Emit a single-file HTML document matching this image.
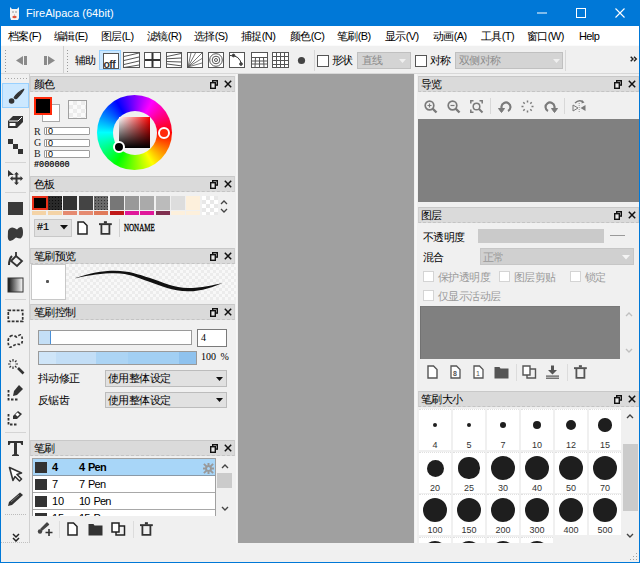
<!DOCTYPE html>
<html><head><meta charset="utf-8">
<style>
*{box-sizing:border-box;margin:0;padding:0}
html,body{width:640px;height:563px;overflow:hidden;background:#f0f0f0;font-family:"Liberation Sans",sans-serif;font-size:11px;color:#000}
.a{position:absolute}
svg{position:absolute;display:block}
#title{left:0;top:0;width:640px;height:26px;background:#0078d7}
#frameL{left:0;top:26px;width:1px;height:537px;background:#0078d7}
#frameR{left:639px;top:26px;width:1px;height:537px;background:#0078d7}
#frameB{left:0;top:562px;width:640px;height:1px;background:#0078d7}
#menu{left:1px;top:26px;width:638px;height:19px;background:#fff}
.mi{position:absolute;top:28px;font-size:11px;line-height:16px;white-space:nowrap;letter-spacing:-0.6px}
#tb{left:1px;top:45px;width:638px;height:29px;background:#f0f0f0;border-top:1px solid #fbfbfb;border-bottom:1px solid #dcdcdc}
.hdr{position:absolute;height:16px;background:#dadada;border:1px solid #cfcfcf;border-top:1px solid #c8c8c8;border-bottom:1px dashed #c4c4c4}
.hdr span{position:absolute;left:3px;top:0px;font-size:11px;line-height:14px;letter-spacing:-0.6px}
.canvas{background:#a0a0a0}
.sep{position:absolute;background:#c8c8c8}
</style></head><body>
<div id="title" class="a"></div>
<div class="a" style="left:26px;top:4px;color:#fff;font-size:11px;line-height:18px;letter-spacing:0.05px">FireAlpaca (64bit)</div>

<svg style="left:9px;top:6px" width="11" height="15"><path d="M1 1 L3 3 L8 3 L10 1 L10 12 L9 14 L2 14 L1 11 Z" fill="#f4f4f4"/><path d="M3 6 H5 M6 6 H8" stroke="#999" stroke-width="1"/><path d="M5 9 H6" stroke="#aaa"/><ellipse cx="5.5" cy="11" rx="2.2" ry="1.2" fill="#e2533a"/></svg>
<svg style="left:537px;top:12px" width="10" height="2"><rect x="0" y="0.5" width="10" height="1" fill="#fff"/></svg>
<svg style="left:576px;top:8px" width="10" height="10"><rect x="0.5" y="0.5" width="9" height="9" fill="none" stroke="#fff"/></svg>
<svg style="left:615px;top:8px" width="10" height="10"><path d="M0.5 0.5 L9.5 9.5 M9.5 0.5 L0.5 9.5" stroke="#fff" stroke-width="1.1"/></svg>
<div id="frameL" class="a"></div><div id="frameR" class="a"></div><div id="frameB" class="a"></div>
<div id="menu" class="a"></div>
<div class="mi" style="left:8px">档案(F)</div>
<div class="mi" style="left:54px">编辑(E)</div>
<div class="mi" style="left:101px">图层(L)</div>
<div class="mi" style="left:147px">滤镜(R)</div>
<div class="mi" style="left:194px">选择(S)</div>
<div class="mi" style="left:241px">捕捉(N)</div>
<div class="mi" style="left:290px">颜色(C)</div>
<div class="mi" style="left:337px">笔刷(B)</div>
<div class="mi" style="left:385px">显示(V)</div>
<div class="mi" style="left:433px">动画(A)</div>
<div class="mi" style="left:481px">工具(T)</div>
<div class="mi" style="left:527px">窗口(W)</div>
<div class="mi" style="left:579px">Help</div>
<div id="tb" class="a"></div>
<!-- toolbar -->
<div class="a" style="left:1px;top:73px;width:638px;height:1px;background:#d8d8d8"></div>
<svg style="left:4px;top:49px" width="4" height="23"><g fill="#9a9a9a"><rect x="1" y="1" width="1" height="1"/><rect x="1" y="4" width="1" height="1"/><rect x="1" y="7" width="1" height="1"/><rect x="1" y="10" width="1" height="1"/><rect x="1" y="13" width="1" height="1"/><rect x="1" y="16" width="1" height="1"/><rect x="1" y="19" width="1" height="1"/><rect x="1" y="22" width="1" height="1"/></g></svg>
<svg style="left:16px;top:56px" width="40" height="10"><g fill="#8a8a8a"><path d="M0 4.5 L7 0 L7 9 Z"/><rect x="8" y="0" width="3" height="9"/><rect x="28" y="0" width="3" height="9"/><path d="M32 0 L39 4.5 L32 9 Z"/></g></svg>
<div class="a" style="left:63px;top:46px;width:1px;height:27px;background:#d0d0d0"></div>
<svg style="left:66px;top:49px" width="4" height="23"><g fill="#9a9a9a"><rect x="1" y="1" width="1" height="1"/><rect x="1" y="4" width="1" height="1"/><rect x="1" y="7" width="1" height="1"/><rect x="1" y="10" width="1" height="1"/><rect x="1" y="13" width="1" height="1"/><rect x="1" y="16" width="1" height="1"/><rect x="1" y="19" width="1" height="1"/><rect x="1" y="22" width="1" height="1"/></g></svg>
<div class="a" style="left:75px;top:53px;font-size:11px;line-height:14px;letter-spacing:-0.6px">辅助</div>
<div class="a" style="left:99px;top:50px;width:22px;height:20px;background:#cce8ff;border:1px solid #99d1ff"></div>
<svg style="left:103px;top:53px" width="16" height="16"><rect x="0.5" y="0.5" width="15" height="15" fill="#fff" stroke="#555"/><text x="0.5" y="15" font-family="Liberation Sans" font-weight="bold" font-size="10.5" fill="#333" letter-spacing="-0.6">off</text></svg>
<svg style="left:123px;top:52px" width="17" height="16" stroke="#555" fill="none"><rect x="0.5" y="0.5" width="16" height="15" fill="#fff"/><path d="M1 4.5 L16 1 M1 8.5 L16 5 M1 12.5 L16 9 M1 15.5 L16 13"/></svg>
<svg style="left:144px;top:52px" width="17" height="16" stroke="#555" fill="none"><rect x="0.5" y="0.5" width="16" height="15" fill="#fff"/><path d="M8.5 1 V15 M1 8 H16" stroke-width="2" stroke="#333"/></svg>
<svg style="left:166px;top:52px" width="16" height="16" stroke="#555" fill="none" stroke-width="0.8"><rect x="0.5" y="0.5" width="15" height="15" fill="#fff" stroke-width="1"/><path d="M1 4.5 L15 1.5 M1 6.8 L15 6 M1 9.5 L15 10 M1 12 L15 13.8" stroke-width="1"/></svg>
<svg style="left:187px;top:52px" width="16" height="16" stroke="#555" fill="none" stroke-width="0.8"><rect x="0.5" y="0.5" width="15" height="15" fill="#fff" stroke-width="1"/><path d="M1 15 L4 1 M1 15 L8.5 1 M1 15 L15 1 M1 15 L15 6.5 M1 15 L15 11"/></svg>
<svg style="left:208px;top:52px" width="16" height="16" stroke="#555" fill="none"><rect x="0.5" y="0.5" width="15" height="15" fill="#fff"/><circle cx="8" cy="8" r="6.3"/><circle cx="8" cy="8" r="3.8"/><circle cx="8" cy="8" r="1.5"/></svg>
<svg style="left:229px;top:52px" width="16" height="16" stroke="#555" fill="none"><rect x="0.5" y="0.5" width="15" height="15" fill="#fff"/><path d="M1 3.5 Q11 3 12.5 13" stroke="#333"/><circle cx="4.5" cy="3.5" r="1.4" fill="#333"/><circle cx="12" cy="12" r="1.4" fill="#333"/></svg>
<svg style="left:251px;top:52px" width="17" height="16" stroke="#555" fill="none"><rect x="0.5" y="0.5" width="16" height="15" fill="#fff"/><path d="M1 5.5 H16 M1 9 H16 M1 12 H16 M4.5 5.5 L4 15 M8.5 5.5 V15 M12.5 5.5 L13 15"/></svg>
<svg style="left:272px;top:52px" width="17" height="16" stroke="#555" fill="none"><rect x="0.5" y="0.5" width="16" height="15" fill="#fff"/><path d="M1 4.5 H16 M1 8.5 H16 M1 12.5 H16 M4.5 1 V15 M8.5 1 V15 M12.5 1 V15"/></svg>
<svg style="left:297px;top:56px" width="9" height="9"><circle cx="4.5" cy="4.5" r="3.6" fill="#444"/></svg>
<div class="a" style="left:314px;top:50px;width:1px;height:21px;background:#d8d8d8"></div>
<div class="a" style="left:317px;top:55px;width:12px;height:12px;background:#fff;border:1px solid #555"></div>
<div class="a" style="left:332px;top:53px;font-size:11px;line-height:14px;letter-spacing:-0.6px">形状</div>
<div class="a" style="left:357px;top:52px;width:54px;height:17px;background:#d4d4d4;border:1px solid #c0c0c0"></div>
<div class="a" style="left:362px;top:53px;font-size:11px;line-height:14px;color:#8c8c8c;letter-spacing:-0.6px">直线</div>
<svg style="left:399px;top:59px" width="7" height="4"><path d="M0 0 H7 L3.5 4 Z" fill="#f0f0f0"/></svg>
<div class="a" style="left:415px;top:55px;width:12px;height:12px;background:#fff;border:1px solid #555"></div>
<div class="a" style="left:430px;top:53px;font-size:11px;line-height:14px;letter-spacing:-0.6px">对称</div>
<div class="a" style="left:455px;top:52px;width:108px;height:17px;background:#d4d4d4;border:1px solid #c0c0c0"></div>
<div class="a" style="left:459px;top:53px;font-size:11px;line-height:14px;color:#8c8c8c;letter-spacing:-0.6px">双侧对称</div>
<svg style="left:553px;top:59px" width="7" height="4"><path d="M0 0 H7 L3.5 4 Z" fill="#f0f0f0"/></svg>
<div class="a" style="left:565px;top:50px;width:1px;height:21px;background:#d8d8d8"></div>
<svg style="left:630px;top:56px" width="8" height="6" fill="none" stroke="#222" stroke-width="1.4"><path d="M0.7 0.7 L3 3 L0.7 5.3 M4 0.7 L6.3 3 L4 5.3"/></svg>


<!-- canvas -->
<div class="a canvas" style="left:238px;top:74px;width:176px;height:469px"></div>

<div class="a" style="left:415px;top:74px;width:2px;height:469px;background:#f7f7f7"></div>
<div class="a" style="left:236px;top:74px;width:1px;height:469px;background:#f7f7f7"></div>
<!-- tool column -->
<div class="a" style="left:1px;top:74px;width:29px;height:469px;border-right:1px solid #d0d0d0;border-bottom:1px dotted #c0c0c0"></div>


<!-- tools -->
<svg style="left:4px;top:77px" width="24" height="3"><g fill="#a8a8a8"><rect x="1" y="1" width="1" height="1"/><rect x="4" y="1" width="1" height="1"/><rect x="7" y="1" width="1" height="1"/><rect x="10" y="1" width="1" height="1"/><rect x="13" y="1" width="1" height="1"/><rect x="16" y="1" width="1" height="1"/><rect x="19" y="1" width="1" height="1"/><rect x="22" y="1" width="1" height="1"/></g></svg>
<div class="a" style="left:2px;top:83px;width:27px;height:25px;background:#cce8ff;border:1px solid #99d1ff"></div>
<svg style="left:7px;top:88px" width="18" height="18"><path d="M16.8 1.2 C16 3 13 7 9.5 10.5 C8.5 11 7.5 10.5 7.2 9.5 C9 6.5 13 3 16.8 1.2 Z" fill="#333" stroke="#333" stroke-width="1.2" stroke-linejoin="round"/><circle cx="4.6" cy="13" r="2.8" fill="#333"/></svg>
<svg style="left:7px;top:115px" width="17" height="14"><path d="M1 6 L6 1 L16 1 L16 7 L10 13 L1 13 Z" fill="#333"/><rect x="2.5" y="8" width="6" height="3" fill="#fff"/><path d="M2 6 L11 6 L15 2" stroke="#fff" stroke-width="1" fill="none"/></svg>
<svg style="left:7px;top:138px" width="17" height="17" fill="#333"><rect x="1" y="1" width="5" height="5"/><rect x="6" y="6" width="5" height="5"/><rect x="11" y="11" width="5" height="5"/></svg>
<div class="a" style="left:5px;top:162px;width:21px;height:1px;background:#d4d4d4"></div>
<svg style="left:7px;top:169px" width="17" height="17" fill="#333"><path d="M1 1 L1 8 L3 6 L7 6 Z"/><path d="M9.5 3 L12 5.5 H10.5 V8.5 H13.5 V7 L16 9.5 L13.5 12 V10.5 H10.5 V13.5 H12 L9.5 16 L7 13.5 H8.5 V10.5 H5.5 V12 L3 9.5 L5.5 7 V8.5 H8.5 V5.5 H7 Z"/></svg>
<div class="a" style="left:5px;top:192px;width:21px;height:1px;background:#d4d4d4"></div>
<svg style="left:7px;top:201px" width="17" height="15"><rect x="1" y="1" width="15" height="13" fill="#3a3a3a"/></svg>
<svg style="left:6px;top:226px" width="18" height="16"><path d="M2 5 Q3 1.5 6.5 1.5 Q9 2 11 3.5 Q13 0.5 15.5 1 Q17 2 17 6.5 Q17 11 14.5 12.5 Q12.5 12.5 10 11.5 Q7 14.5 4 15 Q2 14.5 1.8 11 Z" fill="#3a3a3a"/></svg>
<svg style="left:7px;top:250px" width="17" height="18" fill="none" stroke="#333" stroke-width="1.8"><path d="M9 6 L15 11 L10 16 L4 11 Z"/><path d="M9 2 V6"/><path d="M5 6 Q2 9 2 15" stroke-width="2"/></svg>
<svg style="left:7px;top:277px" width="17" height="16"><defs><linearGradient id="gr" x1="0" x2="1"><stop offset="0" stop-color="#111"/><stop offset="1" stop-color="#fff"/></linearGradient></defs><rect x="1" y="1" width="15" height="14" fill="url(#gr)" stroke="#333"/></svg>
<div class="a" style="left:5px;top:299px;width:21px;height:1px;background:#d4d4d4"></div>
<svg style="left:7px;top:309px" width="17" height="14" fill="none" stroke="#333" stroke-width="1.7" stroke-dasharray="2.8 1.4"><rect x="1.3" y="1.3" width="14.4" height="11"/></svg>
<svg style="left:6px;top:333px" width="18" height="17" fill="none" stroke="#333" stroke-width="1.7" stroke-dasharray="2.6 1.8"><path d="M6 2.5 Q2.5 3.5 2.2 7.5 Q2 12 3.5 14 Q5.5 14.5 8 12.3 Q11 10.5 13.5 11.5 Q16 11.5 16.3 8 Q16.5 3 14.5 1.8 Q12 2.5 10.5 4 Q8 2.3 6 2.5 Z"/></svg>
<svg style="left:7px;top:358px" width="18" height="18" stroke="#333" fill="none"><path d="M11 10 L16.5 15.5" stroke-width="2.6"/><path d="M6 1 V3.5 M6 8.5 V11 M1 6 H3.5 M8.5 6 H11 M2.5 2.5 L4 4 M8 8 L9.5 9.5 M9.5 2.5 L8 4 M2.5 9.5 L4 8" stroke-width="1.2"/></svg>
<svg style="left:7px;top:384px" width="17" height="17"><path d="M1.5 6 V15.5 H11" fill="none" stroke="#333" stroke-width="1.8" stroke-dasharray="2.5 1.5"/><path d="M12 1 L16 5 L10 11 L6 12 L7 7 Z" fill="#333"/></svg>
<svg style="left:7px;top:410px" width="17" height="16"><path d="M1.5 4 V14.5 H11" fill="none" stroke="#333" stroke-width="1.8" stroke-dasharray="2.5 1.5"/><path d="M11 1 L15 4 L10 9 L6 9 L6 6 Z" fill="#333"/><rect x="9" y="3" width="3" height="3" fill="#fff" transform="rotate(40 10.5 4.5)"/></svg>
<div class="a" style="left:5px;top:432px;width:21px;height:1px;background:#d4d4d4"></div>
<svg style="left:7px;top:440px" width="17" height="17"><path d="M1 1 H16 V5 H14.5 L13.5 3 H10 V14 L12 15 V16 H5 V15 L7 14 V3 H3.5 L2.5 5 H1 Z" fill="#333"/></svg>
<svg style="left:8px;top:466px" width="16" height="16"><path d="M1.5 1.5 L13.5 7 L9 8.5 L13.5 13 L11.5 15 L7 10.5 L5 14.5 Z" fill="#fff" stroke="#333" stroke-width="1.6" stroke-linejoin="round"/></svg>
<svg style="left:7px;top:492px" width="17" height="15"><path d="M16 3 L13 0.5 L2 10 L1 14 L5 13 Z" fill="#333"/><path d="M4 10 L12 3" stroke="#888" stroke-width="0.8"/></svg>
<div class="a" style="left:5px;top:514px;width:21px;height:1px;border-top:1px dotted #bbb"></div>
<svg style="left:12px;top:533px" width="8" height="9" fill="none" stroke="#222" stroke-width="1.5"><path d="M1 1 L4 4 L7 1 M1 5 L4 8 L7 5"/></svg>
<!-- color panel -->
<div class="a" style="left:42px;top:104px;width:18px;height:18px;background:#fff;border:1px solid #aaa"></div>
<div class="a" style="left:34px;top:97px;width:18px;height:18px;background:#000;border:2px solid #ff2a0a"></div>
<div class="a" style="left:68px;top:100px;width:19px;height:19px;border:1px solid #a0a0a0;background-color:#fafafa;background-image:linear-gradient(45deg,#ececec 25%,transparent 25%,transparent 75%,#ececec 75%),linear-gradient(45deg,#ececec 25%,transparent 25%,transparent 75%,#ececec 75%);background-size:8px 8px;background-position:0 0,4px 4px"></div>
<div class="a" style="left:34px;top:127px;font-family:'Liberation Serif',serif;font-size:10px;line-height:10px;color:#222">R</div>
<div class="a" style="left:34px;top:138px;font-family:'Liberation Serif',serif;font-size:10px;line-height:10px;color:#222">G</div>
<div class="a" style="left:34px;top:149px;font-family:'Liberation Serif',serif;font-size:10px;line-height:10px;color:#222">B</div>
<div class="a" style="left:44px;top:127px;width:46px;height:8px;background:#fff;border:1px solid #9c9c9c;border-radius:1px"></div>
<div class="a" style="left:44px;top:139px;width:46px;height:8px;background:#fff;border:1px solid #9c9c9c;border-radius:1px"></div>
<div class="a" style="left:44px;top:150px;width:46px;height:8px;background:#fff;border:1px solid #9c9c9c;border-radius:1px"></div>
<div class="a" style="left:46px;top:128px;width:1px;height:6px;background:#888"></div>
<div class="a" style="left:46px;top:140px;width:1px;height:6px;background:#888"></div>
<div class="a" style="left:46px;top:151px;width:1px;height:6px;background:#888"></div>
<div class="a" style="left:48px;top:126px;font-family:'Liberation Sans',sans-serif;font-size:9px;line-height:10px">0</div>
<div class="a" style="left:48px;top:138px;font-family:'Liberation Sans',sans-serif;font-size:9px;line-height:10px">0</div>
<div class="a" style="left:48px;top:149px;font-family:'Liberation Sans',sans-serif;font-size:9px;line-height:10px">0</div>
<div class="a" style="left:34px;top:160px;font-family:'Liberation Mono',monospace;font-size:8.5px;line-height:10px;color:#000;-webkit-text-stroke:0.2px #000">#000000</div>
<div class="a" style="left:97px;top:95px;width:75px;height:75px;border-radius:50%;background:conic-gradient(from 90deg,#f00,#ff0,#0f0,#0ff,#00f,#f0f,#f00)"></div>
<div class="a" style="left:112.5px;top:110.5px;width:44px;height:44px;border-radius:50%;background:#f0f0f0"></div>
<div class="a" style="left:119px;top:117px;width:31px;height:31px;background:linear-gradient(to bottom,rgba(0,0,0,0),#000),linear-gradient(to right,#fff,#f00)"></div>
<div class="a" style="left:158px;top:127px;width:12px;height:12px;border-radius:50%;background:#ff2a0a;border:2px solid #fff"></div>
<div class="a" style="left:113px;top:141px;width:12px;height:12px;border-radius:50%;background:#000;border:2px solid #fff"></div>
<!-- palette -->
<div class="a" style="left:32px;top:196px;width:14px;height:14px;background:#000000"></div>
<div class="a" style="left:32px;top:211px;width:14px;height:4px;background:#f4d3a6"></div>
<div class="a" style="left:48px;top:196px;width:14px;height:14px;background:#2a2a2a;background-image:radial-gradient(circle,#0c0c0c 40%,transparent 45%);background-size:3px 3px"></div>
<div class="a" style="left:48px;top:211px;width:14px;height:4px;background:#f4d3a6"></div>
<div class="a" style="left:63px;top:196px;width:14px;height:14px;background:#333333"></div>
<div class="a" style="left:63px;top:211px;width:14px;height:4px;background:#e58a70"></div>
<div class="a" style="left:79px;top:196px;width:14px;height:14px;background:#444444"></div>
<div class="a" style="left:79px;top:211px;width:14px;height:4px;background:#e58a70"></div>
<div class="a" style="left:94px;top:196px;width:14px;height:14px;background:#6a6a6a;background-image:radial-gradient(circle,#333 40%,transparent 45%);background-size:3px 3px"></div>
<div class="a" style="left:94px;top:211px;width:14px;height:4px;background:#e07a5a"></div>
<div class="a" style="left:110px;top:196px;width:14px;height:14px;background:#777777"></div>
<div class="a" style="left:110px;top:211px;width:14px;height:4px;background:#c01818"></div>
<div class="a" style="left:125px;top:196px;width:14px;height:14px;background:#999999"></div>
<div class="a" style="left:125px;top:211px;width:14px;height:4px;background:#e0189a"></div>
<div class="a" style="left:140px;top:196px;width:14px;height:14px;background:#aaaaaa"></div>
<div class="a" style="left:140px;top:211px;width:14px;height:4px;background:#e0189a"></div>
<div class="a" style="left:156px;top:196px;width:14px;height:14px;background:#bbbbbb"></div>
<div class="a" style="left:156px;top:211px;width:14px;height:4px;background:#803050"></div>
<div class="a" style="left:171px;top:196px;width:14px;height:14px;background:#dddddd"></div>
<div class="a" style="left:171px;top:211px;width:14px;height:4px;background:#fdf0dc"></div>
<div class="a" style="left:186px;top:196px;width:14px;height:14px;background:#fdf0dc"></div>
<div class="a" style="left:186px;top:211px;width:14px;height:4px;background:#fdf0dc"></div>
<div class="a" style="left:202px;top:196px;width:16px;height:19px;background-color:#fff;background-image:linear-gradient(45deg,#e8e8e8 25%,transparent 25%,transparent 75%,#e8e8e8 75%),linear-gradient(45deg,#e8e8e8 25%,transparent 25%,transparent 75%,#e8e8e8 75%);background-size:8px 8px;background-position:0 0,4px 4px"></div>
<div class="a" style="left:32px;top:196px;width:16px;height:14px;border:2px solid #e8301a;background:#000"></div>
<svg style="left:220px;top:199px" width="8" height="16" fill="none" stroke="#444" stroke-width="1.3"><path d="M1 5 L4 2 L7 5 M1 10 L4 13 L7 10"/></svg>
<div class="a" style="left:34px;top:219px;width:38px;height:18px;background:#e1e1e1;border:1px solid #c8c8c8"></div>
<div class="a" style="left:37px;top:221px;font-family:'Liberation Mono',monospace;font-size:10px;line-height:14px;-webkit-text-stroke:0.2px #000">#1</div>
<svg style="left:60px;top:225px" width="8" height="5"><path d="M0 0 H8 L4 4.5 Z" fill="#111"/></svg>
<svg style="left:77px;top:221px" width="11" height="14" fill="#fff" stroke="#222" stroke-width="1.5"><path d="M1 1 H6.5 L10 4.5 V13 H1 Z"/></svg>
<svg style="left:98px;top:220px" width="15" height="16"><rect x="1" y="3.2" width="12.8" height="1.9" fill="#333"/><rect x="5.9" y="1.2" width="3" height="2.2" fill="#333"/><path d="M3.4 5 V13.8 H11.4 V5" fill="none" stroke="#333" stroke-width="1.8"/></svg>
<div class="a" style="left:119px;top:219px;width:1px;height:18px;background:#d0d0d0"></div>
<div class="a" style="left:124px;top:221px;font-family:'Liberation Serif',serif;font-size:10px;line-height:14px;transform:scaleX(0.7);transform-origin:0 0;-webkit-text-stroke:0.3px #000">NONAME</div>
<!-- brush preview -->
<div class="a" style="left:66px;top:264px;width:170px;height:36px;background-color:#f8f8f8;background-image:linear-gradient(45deg,#ececec 25%,transparent 25%,transparent 75%,#ececec 75%),linear-gradient(45deg,#ececec 25%,transparent 25%,transparent 75%,#ececec 75%);background-size:6px 6px;background-position:0 0,3px 3px"></div>
<div class="a" style="left:31px;top:264px;width:35px;height:36px;background:#fff;border:1px solid #c8c8c8"></div>
<div class="a" style="left:46px;top:280px;width:3px;height:3px;background:#555;border-radius:1px"></div>
<svg style="left:66px;top:264px" width="170" height="36"><path d="M9.5 14 C25 9 35 6.8 49 6.8 C63 6.8 72 10.5 84 14 C98 18.5 108 24 122 24 C135 24 148 21 157 18.7 C148 22.5 136 27.3 122 27.3 C106 27.3 95 21.5 84 18 C72 14 63 9.3 49 9.3 C35 9.3 25 11 9.5 14.3 Z" fill="#111"/></svg>
<!-- brush control -->
<div class="a" style="left:38px;top:330px;width:154px;height:15px;background:#fff;border:1px solid #9a9a9a"></div>
<div class="a" style="left:39px;top:331px;width:12px;height:13px;background:#c4dff6;border-right:1px solid #4a90d8"></div>
<div class="a" style="left:197px;top:329px;width:30px;height:18px;background:#fff;border:1px solid #7a7a7a"></div>
<div class="a" style="left:201px;top:331px;font-family:'Liberation Serif',serif;font-size:10px;line-height:14px">4</div>
<div class="a" style="left:38px;top:351px;width:159px;height:14px;border:1px solid #9a9a9a;background:linear-gradient(to right,#cfe5f8 0,#cfe5f8 17px,#c3def6 17px,#c3def6 57px,#acd4f4 57px,#acd4f4 89px,#a2cff3 89px,#a2cff3 140px,#8fc2ee 140px)"></div>
<div class="a" style="left:201px;top:351px;font-family:'Liberation Serif',serif;font-size:10px;line-height:12px;word-spacing:2px">100 %</div>
<div class="a" style="left:38px;top:371px;font-size:11px;line-height:14px;letter-spacing:-0.6px">抖动修正</div>
<div class="a" style="left:38px;top:393px;font-size:11px;line-height:14px;letter-spacing:-0.6px">反锯齿</div>
<div class="a" style="left:105px;top:370px;width:122px;height:17px;background:#e1e1e1;border:1px solid #bcbcbc"></div>
<div class="a" style="left:108px;top:371px;font-size:11px;line-height:14px;letter-spacing:-0.6px">使用整体设定</div>
<svg style="left:216px;top:377px" width="7" height="4"><path d="M0 0 H7 L3.5 4 Z" fill="#111"/></svg>
<div class="a" style="left:105px;top:392px;width:122px;height:16px;background:#e1e1e1;border:1px solid #bcbcbc"></div>
<div class="a" style="left:108px;top:393px;font-size:11px;line-height:14px;letter-spacing:-0.6px">使用整体设定</div>
<svg style="left:216px;top:398px" width="7" height="4"><path d="M0 0 H7 L3.5 4 Z" fill="#111"/></svg>
<!-- brush list -->
<div class="a" style="left:32px;top:458px;width:184px;height:58px;background:#fff;border-left:1px solid #a0a0a0;border-top:1px solid #a0a0a0;border-right:1px solid #a0a0a0;overflow:hidden"><div class="a" style="left:0;top:0px;width:182px;height:17px;background:#a8d6f8;border-bottom:1px solid #8a9aa8"></div><div class="a" style="left:2px;top:3px;width:12px;height:11px;background:#333"></div><div class="a" style="left:19px;top:1px;font-size:11px;line-height:15px;font-weight:bold">4</div><div class="a" style="left:46px;top:1px;font-size:11px;line-height:15px;font-weight:bold;letter-spacing:-0.8px;word-spacing:1.5px">4 Pen</div><div class="a" style="left:0;top:17px;width:182px;height:17px;background:#fff;border-bottom:1px solid #a8a8a8"></div><div class="a" style="left:2px;top:20px;width:12px;height:11px;background:#333"></div><div class="a" style="left:19px;top:18px;font-size:11px;line-height:15px;font-weight:normal">7</div><div class="a" style="left:46px;top:18px;font-size:11px;line-height:15px;font-weight:normal;letter-spacing:-0.8px;word-spacing:1.5px">7 Pen</div><div class="a" style="left:0;top:34px;width:182px;height:17px;background:#fff;border-bottom:1px solid #a8a8a8"></div><div class="a" style="left:2px;top:37px;width:12px;height:11px;background:#333"></div><div class="a" style="left:19px;top:35px;font-size:11px;line-height:15px;font-weight:normal">10</div><div class="a" style="left:46px;top:35px;font-size:11px;line-height:15px;font-weight:normal;letter-spacing:-0.8px;word-spacing:1.5px">10 Pen</div><div class="a" style="left:0;top:51px;width:182px;height:17px;background:#fff;border-bottom:1px solid #a8a8a8"></div><div class="a" style="left:2px;top:54px;width:12px;height:11px;background:#333"></div><div class="a" style="left:19px;top:52px;font-size:11px;line-height:15px;font-weight:normal">15</div><div class="a" style="left:46px;top:52px;font-size:11px;line-height:15px;font-weight:normal;letter-spacing:-0.8px;word-spacing:1.5px">15 Pen</div><svg style="left:170px;top:4px" width="11" height="11" viewBox="0 0 11 11" preserveAspectRatio="none"><g fill="#999"><circle cx="5.5" cy="5.5" r="3.3"/><path d="M4.5 0 H6.5 V11 H4.5 Z M0 4.5 V6.5 H11 V4.5 Z M1.6 0.2 L10.8 9.4 L9.4 10.8 L0.2 1.6 Z M9.4 0.2 L10.8 1.6 L1.6 10.8 L0.2 9.4 Z"/></g><circle cx="5.5" cy="5.5" r="1.5" fill="#a8d6f8"/></svg></div>
<svg style="left:221px;top:463px" width="8" height="6" fill="none" stroke="#444" stroke-width="1.4"><path d="M1 5 L4 2 L7 5"/></svg>
<div class="a" style="left:217px;top:473px;width:15px;height:15px;background:#cbcbcb"></div>
<svg style="left:221px;top:506px" width="8" height="6" fill="none" stroke="#444" stroke-width="1.4"><path d="M1 1 L4 4 L7 1"/></svg>
<svg style="left:37px;top:522px" width="17" height="15"><path d="M10 1 L11.5 2.5 L5 8 L4 7 Z" fill="#444" stroke="#444" stroke-width="1.4" stroke-linejoin="round"/><circle cx="3" cy="9.5" r="2.2" fill="#444"/><path d="M12 7 V14 M8.5 10.5 H15.5" stroke="#333" stroke-width="1.6"/></svg>
<div class="a" style="left:59px;top:521px;width:1px;height:17px;background:#dcdcdc"></div>
<svg style="left:67px;top:522px" width="11" height="14" fill="#fff" stroke="#222" stroke-width="1.5"><path d="M1 1 H6.5 L10 4.5 V13 H1 Z"/></svg>
<svg style="left:88px;top:523px" width="15" height="13"><path d="M0.5 1 H5.5 L6.5 2.5 H14.5 V12.5 H0.5 Z" fill="#333"/></svg>
<svg style="left:111px;top:522px" width="15" height="14" fill="none" stroke="#222" stroke-width="1.5"><path d="M1 1 H8 V10 H1 Z" fill="#fff"/><path d="M8 4 H13.5 V13 H5 V10"/></svg>
<div class="a" style="left:133px;top:521px;width:1px;height:17px;background:#dcdcdc"></div>
<svg style="left:139px;top:521px" width="15" height="16"><rect x="1" y="3.2" width="12.8" height="1.9" fill="#333"/><rect x="5.9" y="1.2" width="3" height="2.2" fill="#333"/><path d="M3.4 5 V13.8 H11.4 V5" fill="none" stroke="#333" stroke-width="1.8"/></svg>
<!-- left headers -->
<div class="hdr" style="left:30px;top:76px;width:205px"><span>颜色</span></div>
<div class="hdr" style="left:30px;top:176px;width:205px"><span>色板</span></div>
<div class="hdr" style="left:30px;top:248px;width:205px"><span>笔刷预览</span></div>
<div class="hdr" style="left:30px;top:304px;width:205px"><span>笔刷控制</span></div>
<div class="hdr" style="left:30px;top:440px;width:205px"><span>笔刷</span></div>
<!-- right headers -->
<div class="hdr" style="left:418px;top:76px;width:221px"><span style="left:2px">导览</span></div>
<div class="hdr" style="left:418px;top:207px;width:221px"><span style="left:2px">图层</span></div>
<div class="hdr" style="left:418px;top:391px;width:221px"><span style="left:2px">笔刷大小</span></div>
<!-- hdr icons -->

<svg style="left:210px;top:80px" width="8" height="9" fill="none" stroke="#111" stroke-width="1.4"><rect x="2.7" y="0.7" width="4.6" height="4.4"/><rect x="0.7" y="2.7" width="4.6" height="5.6" fill="#e8e8e8"/></svg>
<svg style="left:224px;top:80px" width="8" height="8"><path d="M0.8 0.8 L7.2 7.2 M7.2 0.8 L0.8 7.2" stroke="#111" stroke-width="1.5"/></svg>
<svg style="left:210px;top:180px" width="8" height="9" fill="none" stroke="#111" stroke-width="1.4"><rect x="2.7" y="0.7" width="4.6" height="4.4"/><rect x="0.7" y="2.7" width="4.6" height="5.6" fill="#e8e8e8"/></svg>
<svg style="left:224px;top:180px" width="8" height="8"><path d="M0.8 0.8 L7.2 7.2 M7.2 0.8 L0.8 7.2" stroke="#111" stroke-width="1.5"/></svg>
<svg style="left:210px;top:252px" width="8" height="9" fill="none" stroke="#111" stroke-width="1.4"><rect x="2.7" y="0.7" width="4.6" height="4.4"/><rect x="0.7" y="2.7" width="4.6" height="5.6" fill="#e8e8e8"/></svg>
<svg style="left:224px;top:252px" width="8" height="8"><path d="M0.8 0.8 L7.2 7.2 M7.2 0.8 L0.8 7.2" stroke="#111" stroke-width="1.5"/></svg>
<svg style="left:210px;top:308px" width="8" height="9" fill="none" stroke="#111" stroke-width="1.4"><rect x="2.7" y="0.7" width="4.6" height="4.4"/><rect x="0.7" y="2.7" width="4.6" height="5.6" fill="#e8e8e8"/></svg>
<svg style="left:224px;top:308px" width="8" height="8"><path d="M0.8 0.8 L7.2 7.2 M7.2 0.8 L0.8 7.2" stroke="#111" stroke-width="1.5"/></svg>
<svg style="left:210px;top:444px" width="8" height="9" fill="none" stroke="#111" stroke-width="1.4"><rect x="2.7" y="0.7" width="4.6" height="4.4"/><rect x="0.7" y="2.7" width="4.6" height="5.6" fill="#e8e8e8"/></svg>
<svg style="left:224px;top:444px" width="8" height="8"><path d="M0.8 0.8 L7.2 7.2 M7.2 0.8 L0.8 7.2" stroke="#111" stroke-width="1.5"/></svg>
<svg style="left:614px;top:80px" width="8" height="9" fill="none" stroke="#111" stroke-width="1.4"><rect x="2.7" y="0.7" width="4.6" height="4.4"/><rect x="0.7" y="2.7" width="4.6" height="5.6" fill="#e8e8e8"/></svg>
<svg style="left:628px;top:80px" width="8" height="8"><path d="M0.8 0.8 L7.2 7.2 M7.2 0.8 L0.8 7.2" stroke="#111" stroke-width="1.5"/></svg>
<svg style="left:614px;top:211px" width="8" height="9" fill="none" stroke="#111" stroke-width="1.4"><rect x="2.7" y="0.7" width="4.6" height="4.4"/><rect x="0.7" y="2.7" width="4.6" height="5.6" fill="#e8e8e8"/></svg>
<svg style="left:628px;top:211px" width="8" height="8"><path d="M0.8 0.8 L7.2 7.2 M7.2 0.8 L0.8 7.2" stroke="#111" stroke-width="1.5"/></svg>
<svg style="left:614px;top:395px" width="8" height="9" fill="none" stroke="#111" stroke-width="1.4"><rect x="2.7" y="0.7" width="4.6" height="4.4"/><rect x="0.7" y="2.7" width="4.6" height="5.6" fill="#e8e8e8"/></svg>
<svg style="left:628px;top:395px" width="8" height="8"><path d="M0.8 0.8 L7.2 7.2 M7.2 0.8 L0.8 7.2" stroke="#111" stroke-width="1.5"/></svg>

<div class="a" style="left:418px;top:119px;width:221px;height:83px;background:#808080"></div>
<div class="a" style="left:420px;top:306px;width:200px;height:53px;background:#808080;border-left:1px solid #727272;border-top:1px solid #787878"></div>

<!-- nav -->
<svg style="left:424px;top:100px" width="14" height="14" fill="none" stroke="#7a7a7a" stroke-width="1.7"><circle cx="5.5" cy="5.5" r="4.3"/><path d="M8.5 8.5 L12.5 12.5" stroke-width="2.4"/><path d="M3.5 5.5 H7.5 M5.5 3.5 V7.5" stroke-width="1.2"/></svg>
<svg style="left:447px;top:100px" width="14" height="14" fill="none" stroke="#7a7a7a" stroke-width="1.7"><circle cx="5.5" cy="5.5" r="4.3"/><path d="M8.5 8.5 L12.5 12.5" stroke-width="2.4"/><path d="M3.5 5.5 H7.5" stroke-width="1.2"/></svg>
<svg style="left:470px;top:100px" width="14" height="14" fill="none" stroke="#7a7a7a" stroke-width="1.5"><circle cx="6.5" cy="6.5" r="3.3"/><path d="M9 9 L12.5 12.5" stroke-width="2"/><path d="M0.8 3.5 V0.8 H3.5 M9.5 0.8 H12.2 V3.5 M0.8 9.5 V12.2 H3.5"/></svg>
<div class="a" style="left:490px;top:98px;width:1px;height:16px;background:#d8d8d8"></div>
<svg style="left:498px;top:100px" width="14" height="14" fill="none" stroke="#7a7a7a" stroke-width="2.2"><path d="M3.5 11 V6.5 A4.5 4.5 0 1 1 10 11"/><path d="M0.5 8.5 L3.5 12.5 L6.5 8.5 Z" fill="#7a7a7a" stroke-width="1"/></svg>
<svg style="left:521px;top:100px" width="13" height="13" stroke="#7a7a7a" stroke-width="1.5"><path d="M6.5 0.5 V2.5 M6.5 10.5 V12.5 M0.5 6.5 H2.5 M10.5 6.5 H12.5 M2.3 2.3 L3.7 3.7 M9.3 9.3 L10.7 10.7 M10.7 2.3 L9.3 3.7 M2.3 10.7 L3.7 9.3"/></svg>
<svg style="left:544px;top:100px" width="14" height="14" fill="none" stroke="#7a7a7a" stroke-width="2.2"><path d="M10.5 11 V6.5 A4.5 4.5 0 1 0 4 11"/><path d="M13.5 8.5 L10.5 12.5 L7.5 8.5 Z" fill="#7a7a7a" stroke-width="1"/></svg>
<div class="a" style="left:564px;top:98px;width:1px;height:16px;background:#d8d8d8"></div>
<svg style="left:572px;top:99px" width="15" height="15"><path d="M1 6 L6 9 L1 12 Z" fill="none" stroke="#7a7a7a" stroke-width="1"/><path d="M13.5 6 L8.5 9 L13.5 12 Z" fill="#7a7a7a"/><path d="M7.2 4 V14" stroke="#7a7a7a" stroke-width="0.8" stroke-dasharray="1 1"/><path d="M3 4 Q7 0 11 3" fill="none" stroke="#7a7a7a" stroke-width="1.3"/><path d="M10 1 L12.5 3.5 L9.5 4.5 Z" fill="#7a7a7a"/></svg>
<!-- layers -->
<div class="a" style="left:423px;top:230px;font-size:11px;line-height:14px;letter-spacing:-0.6px">不透明度</div>
<div class="a" style="left:478px;top:229px;width:126px;height:14px;background:#cacaca"></div>
<div class="a" style="left:610px;top:235px;width:15px;height:1px;background:#9a9a9a"></div>
<div class="a" style="left:423px;top:250px;font-size:11px;line-height:14px;letter-spacing:-0.6px">混合</div>
<div class="a" style="left:480px;top:248px;width:154px;height:17px;background:#d0d0d0;border:1px solid #c6c6c6"></div>
<div class="a" style="left:483px;top:250px;font-size:11px;line-height:14px;color:#9a9a9a;letter-spacing:-0.6px">正常</div>
<svg style="left:622px;top:255px" width="8" height="5"><path d="M0 0 H8 L4 4.5 Z" fill="#f4f4f4"/></svg>
<div class="a" style="left:423px;top:271px;width:11px;height:11px;background:#fff;border:1px solid #d4d4d4"></div>
<div class="a" style="left:438px;top:270px;font-size:11px;line-height:14px;color:#9a9a9a;letter-spacing:-0.6px">保护透明度</div>
<div class="a" style="left:499px;top:271px;width:11px;height:11px;background:#fff;border:1px solid #d4d4d4"></div>
<div class="a" style="left:514px;top:270px;font-size:11px;line-height:14px;color:#9a9a9a;letter-spacing:-0.6px">图层剪贴</div>
<div class="a" style="left:570px;top:271px;width:11px;height:11px;background:#fff;border:1px solid #d4d4d4"></div>
<div class="a" style="left:585px;top:270px;font-size:11px;line-height:14px;color:#9a9a9a;letter-spacing:-0.6px">锁定</div>
<div class="a" style="left:423px;top:290px;width:11px;height:11px;background:#fff;border:1px solid #d4d4d4"></div>
<div class="a" style="left:438px;top:289px;font-size:11px;line-height:14px;color:#9a9a9a;letter-spacing:-0.6px">仅显示活动层</div>
<svg style="left:625px;top:311px" width="8" height="6" fill="none" stroke="#c0c0c0" stroke-width="1.4"><path d="M1 5 L4 2 L7 5"/></svg>
<svg style="left:625px;top:348px" width="8" height="6" fill="none" stroke="#c0c0c0" stroke-width="1.4"><path d="M1 1 L4 4 L7 1"/></svg>
<svg style="left:427px;top:365px" width="11" height="14" fill="#fff" stroke="#555" stroke-width="1.4"><path d="M1 1 H6.5 L10 4.5 V13 H1 Z"/></svg>
<svg style="left:450px;top:365px" width="11" height="14" fill="#fff" stroke="#555" stroke-width="1.3"><path d="M1 1 H6.5 L10 4.5 V13 H1 Z"/><text x="3" y="11" font-size="7" font-family="Liberation Sans" fill="#555" stroke="none" font-weight="bold">8</text></svg>
<svg style="left:473px;top:365px" width="11" height="14" fill="#fff" stroke="#555" stroke-width="1.3"><path d="M1 1 H6.5 L10 4.5 V13 H1 Z"/><text x="3" y="11" font-size="7" font-family="Liberation Sans" fill="#555" stroke="none">1</text></svg>
<svg style="left:494px;top:366px" width="15" height="13"><path d="M0.5 1 H5.5 L6.5 2.5 H14.5 V12.5 H0.5 Z" fill="#555"/></svg>
<div class="a" style="left:516px;top:364px;width:1px;height:17px;background:#dcdcdc"></div>
<svg style="left:522px;top:365px" width="15" height="14" fill="none" stroke="#555" stroke-width="1.4"><path d="M1 1 H8 V10 H1 Z" fill="#fff"/><path d="M8 4 H13.5 V13 H5 V10"/></svg>
<svg style="left:545px;top:365px" width="15" height="14" fill="#555"><path d="M6 0.5 H9 V5 H12 L7.5 9.5 L3 5 H6 Z"/><rect x="1" y="10.5" width="13" height="1.2"/><rect x="1" y="12.6" width="13" height="1.2"/></svg>
<div class="a" style="left:567px;top:364px;width:1px;height:17px;background:#dcdcdc"></div>
<svg style="left:573px;top:364px" width="15" height="16"><rect x="1" y="3.2" width="12.8" height="1.9" fill="#555"/><rect x="5.9" y="1.2" width="3" height="2.2" fill="#555"/><path d="M3.4 5 V13.8 H11.4 V5" fill="none" stroke="#555" stroke-width="1.8"/></svg>
<!-- brush size -->
<div class="a" style="left:418px;top:408px;width:205px;height:135px;overflow:hidden"><div class="a" style="left:1px;top:1px;width:32px;height:41px;background:#fff;border-top:1px dotted #e0e0e0"></div><div class="a" style="left:15px;top:15px;width:4px;height:4px;border-radius:50%;background:#1e1e1e"></div><div class="a" style="left:1px;top:31px;width:32px;text-align:center;font-size:9px;line-height:12px;color:#333">4</div><div class="a" style="left:35px;top:1px;width:32px;height:41px;background:#fff;border-top:1px dotted #e0e0e0"></div><div class="a" style="left:49px;top:15px;width:4px;height:4px;border-radius:50%;background:#1e1e1e"></div><div class="a" style="left:35px;top:31px;width:32px;text-align:center;font-size:9px;line-height:12px;color:#333">5</div><div class="a" style="left:69px;top:1px;width:32px;height:41px;background:#fff;border-top:1px dotted #e0e0e0"></div><div class="a" style="left:81.7px;top:13.7px;width:6.6px;height:6.6px;border-radius:50%;background:#1e1e1e"></div><div class="a" style="left:69px;top:31px;width:32px;text-align:center;font-size:9px;line-height:12px;color:#333">7</div><div class="a" style="left:103px;top:1px;width:32px;height:41px;background:#fff;border-top:1px dotted #e0e0e0"></div><div class="a" style="left:114.8px;top:12.8px;width:8.4px;height:8.4px;border-radius:50%;background:#1e1e1e"></div><div class="a" style="left:103px;top:31px;width:32px;text-align:center;font-size:9px;line-height:12px;color:#333">10</div><div class="a" style="left:137px;top:1px;width:32px;height:41px;background:#fff;border-top:1px dotted #e0e0e0"></div><div class="a" style="left:147.8px;top:11.8px;width:10.4px;height:10.4px;border-radius:50%;background:#1e1e1e"></div><div class="a" style="left:137px;top:31px;width:32px;text-align:center;font-size:9px;line-height:12px;color:#333">12</div><div class="a" style="left:171px;top:1px;width:32px;height:41px;background:#fff;border-top:1px dotted #e0e0e0"></div><div class="a" style="left:180.4px;top:10.4px;width:13.2px;height:13.2px;border-radius:50%;background:#1e1e1e"></div><div class="a" style="left:171px;top:31px;width:32px;text-align:center;font-size:9px;line-height:12px;color:#333">15</div><div class="a" style="left:1px;top:44px;width:32px;height:41px;background:#fff;border-top:1px dotted #e0e0e0"></div><div class="a" style="left:8.5px;top:51.5px;width:17.0px;height:17.0px;border-radius:50%;background:#1e1e1e"></div><div class="a" style="left:1px;top:74px;width:32px;text-align:center;font-size:9px;line-height:12px;color:#333">20</div><div class="a" style="left:35px;top:44px;width:32px;height:41px;background:#fff;border-top:1px dotted #e0e0e0"></div><div class="a" style="left:40.4px;top:49.4px;width:21.2px;height:21.2px;border-radius:50%;background:#1e1e1e"></div><div class="a" style="left:35px;top:74px;width:32px;text-align:center;font-size:9px;line-height:12px;color:#333">25</div><div class="a" style="left:69px;top:44px;width:32px;height:41px;background:#fff;border-top:1px dotted #e0e0e0"></div><div class="a" style="left:72.8px;top:47.8px;width:24.4px;height:24.4px;border-radius:50%;background:#1e1e1e"></div><div class="a" style="left:69px;top:74px;width:32px;text-align:center;font-size:9px;line-height:12px;color:#333">30</div><div class="a" style="left:103px;top:44px;width:32px;height:41px;background:#fff;border-top:1px dotted #e0e0e0"></div><div class="a" style="left:106.8px;top:47.8px;width:24.4px;height:24.4px;border-radius:50%;background:#1e1e1e"></div><div class="a" style="left:103px;top:74px;width:32px;text-align:center;font-size:9px;line-height:12px;color:#333">40</div><div class="a" style="left:137px;top:44px;width:32px;height:41px;background:#fff;border-top:1px dotted #e0e0e0"></div><div class="a" style="left:140.8px;top:47.8px;width:24.4px;height:24.4px;border-radius:50%;background:#1e1e1e"></div><div class="a" style="left:137px;top:74px;width:32px;text-align:center;font-size:9px;line-height:12px;color:#333">50</div><div class="a" style="left:171px;top:44px;width:32px;height:41px;background:#fff;border-top:1px dotted #e0e0e0"></div><div class="a" style="left:174.8px;top:47.8px;width:24.4px;height:24.4px;border-radius:50%;background:#1e1e1e"></div><div class="a" style="left:171px;top:74px;width:32px;text-align:center;font-size:9px;line-height:12px;color:#333">70</div><div class="a" style="left:1px;top:86px;width:32px;height:41px;background:#fff;border-top:1px dotted #e0e0e0"></div><div class="a" style="left:4.800000000000001px;top:89.8px;width:24.4px;height:24.4px;border-radius:50%;background:#1e1e1e"></div><div class="a" style="left:1px;top:116px;width:32px;text-align:center;font-size:9px;line-height:12px;color:#333">100</div><div class="a" style="left:35px;top:86px;width:32px;height:41px;background:#fff;border-top:1px dotted #e0e0e0"></div><div class="a" style="left:38.8px;top:89.8px;width:24.4px;height:24.4px;border-radius:50%;background:#1e1e1e"></div><div class="a" style="left:35px;top:116px;width:32px;text-align:center;font-size:9px;line-height:12px;color:#333">150</div><div class="a" style="left:69px;top:86px;width:32px;height:41px;background:#fff;border-top:1px dotted #e0e0e0"></div><div class="a" style="left:72.8px;top:89.8px;width:24.4px;height:24.4px;border-radius:50%;background:#1e1e1e"></div><div class="a" style="left:69px;top:116px;width:32px;text-align:center;font-size:9px;line-height:12px;color:#333">200</div><div class="a" style="left:103px;top:86px;width:32px;height:41px;background:#fff;border-top:1px dotted #e0e0e0"></div><div class="a" style="left:106.8px;top:89.8px;width:24.4px;height:24.4px;border-radius:50%;background:#1e1e1e"></div><div class="a" style="left:103px;top:116px;width:32px;text-align:center;font-size:9px;line-height:12px;color:#333">300</div><div class="a" style="left:137px;top:86px;width:32px;height:41px;background:#fff;border-top:1px dotted #e0e0e0"></div><div class="a" style="left:140.8px;top:89.8px;width:24.4px;height:24.4px;border-radius:50%;background:#1e1e1e"></div><div class="a" style="left:137px;top:116px;width:32px;text-align:center;font-size:9px;line-height:12px;color:#333">400</div><div class="a" style="left:171px;top:86px;width:32px;height:41px;background:#fff;border-top:1px dotted #e0e0e0"></div><div class="a" style="left:174.8px;top:89.8px;width:24.4px;height:24.4px;border-radius:50%;background:#1e1e1e"></div><div class="a" style="left:171px;top:116px;width:32px;text-align:center;font-size:9px;line-height:12px;color:#333">500</div><div class="a" style="left:1px;top:129px;width:32px;height:41px;background:#fff;border-top:1px dotted #e0e0e0"></div><div class="a" style="left:5px;top:133px;width:24px;height:24px;border-radius:50%;background:#1e1e1e"></div><div class="a" style="left:35px;top:129px;width:32px;height:41px;background:#fff;border-top:1px dotted #e0e0e0"></div><div class="a" style="left:39px;top:133px;width:24px;height:24px;border-radius:50%;background:#1e1e1e"></div><div class="a" style="left:69px;top:129px;width:32px;height:41px;background:#fff;border-top:1px dotted #e0e0e0"></div><div class="a" style="left:73px;top:133px;width:24px;height:24px;border-radius:50%;background:#1e1e1e"></div><div class="a" style="left:103px;top:129px;width:32px;height:41px;background:#fff;border-top:1px dotted #e0e0e0"></div><div class="a" style="left:107px;top:133px;width:24px;height:24px;border-radius:50%;background:#1e1e1e"></div></div>
<div class="a" style="left:623px;top:408px;width:15px;height:135px;background:#f0f0f0"></div>
<svg style="left:626px;top:413px" width="8" height="6" fill="none" stroke="#444" stroke-width="1.4"><path d="M1 5 L4 2 L7 5"/></svg>
<div class="a" style="left:623px;top:444px;width:15px;height:67px;background:#cbcbcb"></div>
<svg style="left:626px;top:533px" width="8" height="6" fill="none" stroke="#444" stroke-width="1.4"><path d="M1 1 L4 4 L7 1"/></svg>
<svg style="left:630px;top:553px" width="8" height="8" fill="#a0a0a0"><rect x="6" y="0" width="1" height="1"/><rect x="3" y="3" width="1" height="1"/><rect x="6" y="3" width="1" height="1"/><rect x="0" y="6" width="1" height="1"/><rect x="3" y="6" width="1" height="1"/><rect x="6" y="6" width="1" height="1"/></svg>
</body></html>
